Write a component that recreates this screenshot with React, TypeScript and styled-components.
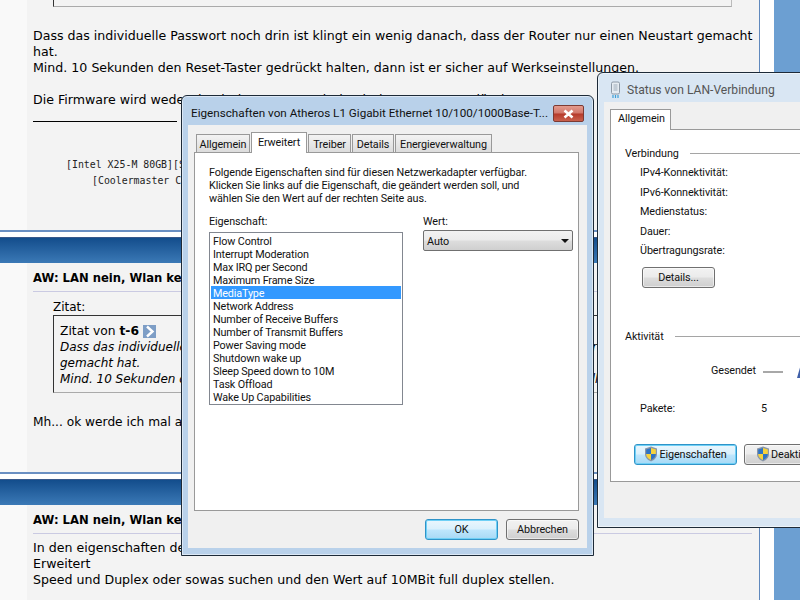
import React from "react";
import styled, { createGlobalStyle } from "styled-components";

const Global = createGlobalStyle`
  html, body { margin: 0; padding: 0; width: 800px; height: 600px; overflow: hidden; background: #fff; }
  #root { width: 800px; height: 600px; }
`;

const Page = styled.div`
  position: relative;
  width: 800px;
  height: 600px;
  overflow: hidden;
  display: grid;
  grid-template-columns: 760px 14px 26px;
  font: 12.6px/16px "DejaVu Sans", Verdana, sans-serif;
  color: #000;
  background: #fff;
`;
const Main = styled.main`
  border-right: 1px solid #5f88bd;
  display: flex;
  flex-direction: column;
  height: 600px;
  overflow: hidden;
`;
const Side = styled.div`
  grid-column: 3;
  background: #6c9fd2;
`;
const Post = styled.section<{ $h: number }>`
  height: ${(p) => p.$h}px;
  flex: none;
  box-sizing: border-box;
  border-left: 27px solid #f9f9f9;
  background: #f3f3f3;
  padding: 0 7px 0 6px;
  overflow: hidden;
`;
const Separator = styled.div`
  flex: none;
  height: 33px;
  box-sizing: border-box;
  border-top: 2px solid #6a8fc2;
  background: #fff;
  padding-top: 5px;
`;
const Band = styled.div`
  height: 26px;
  box-sizing: border-box;
  border-top: 1px solid #38588a;
  background: linear-gradient(#134d8c, #3b79b6);
`;
const TopQuote = styled.div`
  margin-left: 20px;
  width: 679px;
  height: 7px;
  box-sizing: border-box;
  border-left: 1px solid #333;
  border-right: 1px solid #bbb;
  border-bottom: 1px solid #aaa;
`;
const Para = styled.p<{ $top?: number; $size?: number }>`
  margin: ${(p) => p.$top ?? 0}px 0 0;
  font-size: ${(p) => p.$size ?? 12.6}px;
  white-space: nowrap;
`;
const SigRule = styled.div`
  width: 144px;
  height: 1px;
  background: #000;
  margin-top: 13px;
`;
const Sig = styled.div<{ $indent: number; $top: number }>`
  font: 9.9px/16px "DejaVu Sans Mono", monospace;
  margin: ${(p) => p.$top}px 0 0 ${(p) => p.$indent}px;
  white-space: nowrap;
  color: #222;
`;
const PostTitle = styled.h3`
  margin: 0;
  padding: 7px 0 5px;
  font: bold 11.6px/16px "DejaVu Sans", Verdana, sans-serif;
  border-bottom: 1px solid #cacae2;
  white-space: nowrap;
`;
const QuoteLabel = styled.div`
  margin: 7px 0 0 20px;
  font-size: 12px;
  line-height: 16px;
`;
const QuoteBox = styled.blockquote`
  margin: 0 0 0 20px;
  width: 679px;
  height: 78px;
  box-sizing: border-box;
  border: 1px solid #aaa;
  border-left-color: #333;
  border-top-color: #333;
  padding: 7px 6px 0;
  white-space: nowrap;
  font-size: 12.3px;
`;
const Author = styled.b`
  font-weight: bold;
`;
const QuoteArrow = styled.span`
  display: inline-flex;
  vertical-align: -3px;
  margin-left: 4px;
`;
const Em = styled.div`
  font-style: italic;
  font-size: 12px;
`;

/* windows */
const Win = styled.div<{ $x: number; $y: number; $w: number; $h: number; $glass: string; $pb: number }>`
  position: absolute;
  left: ${(p) => p.$x}px;
  top: ${(p) => p.$y}px;
  width: ${(p) => p.$w}px;
  height: ${(p) => p.$h}px;
  box-sizing: border-box;
  border: 1px solid #1d2a38;
  border-radius: 6px 6px 0 0;
  background: ${(p) => p.$glass};
  box-shadow: inset 0 0 0 1px rgba(255, 255, 255, 0.5);
  padding: 0 6px ${(p) => p.$pb}px;
  display: flex;
  flex-direction: column;
  font: 10.8px/13px Roboto, "Noto Sans", sans-serif;
  letter-spacing: -0.1px;
  color: #111;
`;
const TitleBar = styled.div`
  height: 29px;
  box-sizing: border-box;
  padding-top: 5px;
  flex: none;
  display: flex;
  align-items: center;
  white-space: nowrap;
  position: relative;
  letter-spacing: 0;
`;
const TitleIcon = styled.svg`
  margin: 0 5px;
  flex: none;
`;
const GreyTitle = styled.span`
  color: #555;
  font-size: 12.1px;
`;
const DarkTitle = styled.span`
  margin-left: 3px;
  color: #111;
  font-size: 11.7px;
`;
const CloseBtn = styled.div`
  position: absolute;
  right: 3px;
  top: 9px;
  width: 31px;
  height: 17px;
  box-sizing: border-box;
  border: 1px solid #7c3a33;
  border-radius: 2px;
  background: linear-gradient(#e39a8d 0%, #d1766a 48%, #b5392a 52%, #c9604d 100%);
  display: flex;
  align-items: center;
  justify-content: center;
`;
const Client = styled.div<{ $pr: number }>`
  flex: 1;
  background: #f0f0f0;
  padding: 7px ${(p) => p.$pr}px 0 6px;
  display: flex;
  flex-direction: column;
  min-height: 0;
`;
const Tabs = styled.div`
  display: flex;
  gap: 1px;
  height: 20px;
  flex: none;
  padding-left: 2px;
  align-items: flex-end;
`;
const Tab = styled.div<{ $active?: boolean; $w: number }>`
  width: ${(p) => p.$w}px;
  height: ${(p) => (p.$active ? 21 : 18)}px;
  box-sizing: border-box;
  padding-top: 2px;
  text-align: center;
  border: 1px solid #999;
  border-bottom: none;
  margin-bottom: ${(p) => (p.$active ? -1 : 0)}px;
  background: ${(p) => (p.$active ? "#fff" : "linear-gradient(#f3f3f3, #dcdcdc)")};
  position: relative;
  z-index: ${(p) => (p.$active ? 2 : 1)};
  line-height: 15px;
  white-space: nowrap;
`;
const Pane = styled.div`
  flex: 1;
  box-sizing: border-box;
  background: #fff;
  border: 1px solid #999;
  padding: 13px 4px 0 14px;
  min-height: 0;
`;
const Intro = styled.div`
  line-height: 13px;
  white-space: nowrap;
`;
const Columns = styled.div`
  display: flex;
  gap: 20px;
  margin-top: 9px;
`;
const Col = styled.div<{ $w: number }>`
  width: ${(p) => p.$w}px;
`;
const Label = styled.div`
  height: 17px;
  line-height: 13px;
  padding-top: 1px;
  box-sizing: border-box;
`;
const ListBox = styled.div`
  box-sizing: border-box;
  height: 173px;
  border: 1px solid #828790;
  padding: 1px;
  margin-top: 1px;
`;
const ListItem = styled.div<{ $sel?: boolean }>`
  height: 13px;
  line-height: 15px;
  padding-left: 2px;
  letter-spacing: -0.15px;
  background: ${(p) => (p.$sel ? "#3399ff" : "transparent")};
  color: ${(p) => (p.$sel ? "#fff" : "#111")};
  white-space: nowrap;
`;
const Combo = styled.div`
  height: 21px;
  box-sizing: border-box;
  border: 1px solid #707070;
  border-radius: 2px;
  background: linear-gradient(#f2f2f2 0%, #ebebeb 48%, #dddddd 52%, #cfcfcf 100%);
  display: flex;
  align-items: center;
  justify-content: space-between;
  padding: 1px 3px 0;
  margin-top: -1px;
`;
const Caret = styled.span`
  width: 0;
  height: 0;
  border-left: 4px solid transparent;
  border-right: 4px solid transparent;
  border-top: 4px solid #111;
`;
const Footer = styled.div`
  flex: none;
  height: 37px;
  box-sizing: border-box;
  display: flex;
  justify-content: flex-end;
  align-items: flex-start;
  gap: 8px;
  padding: 8px 0 0;
`;
const Btn = styled.div<{ $w: number; $focus?: boolean }>`
  width: ${(p) => p.$w}px;
  height: 21px;
  box-sizing: border-box;
  border: 1px solid ${(p) => (p.$focus ? "#2f93c8" : "#707070")};
  border-radius: 3px;
  background: ${(p) =>
    p.$focus
      ? "linear-gradient(#eaf6fd 0%, #d9f0fc 48%, #bee6fd 52%, #a7d9f5 100%)"
      : "linear-gradient(#f2f2f2 0%, #ebebeb 48%, #dddddd 52%, #cfcfcf 100%)"};
  box-shadow: inset 0 0 0 1px ${(p) => (p.$focus ? "#6fd0f6" : "rgba(255, 255, 255, 0.55)")};
  display: flex;
  align-items: center;
  justify-content: center;
  flex: none;
  white-space: nowrap;
`;
const StatusTab = styled.div`
  width: 61px;
  height: 21px;
  flex: none;
  box-sizing: border-box;
  border: 1px solid #999;
  border-bottom: none;
  background: #fff;
  margin-bottom: -1px;
  position: relative;
  z-index: 2;
  padding: 2px 0 0 7px;
  line-height: 14px;
`;
const StatusPane = styled.div`
  flex: none;
  height: 353px;
  width: 400px;
  box-sizing: border-box;
  background: #fff;
  border: 1px solid #999;
  padding-left: 14px;
`;
const GroupHead = styled.div<{ $top: number }>`
  display: flex;
  align-items: center;
  gap: 11px;
  margin-top: ${(p) => p.$top}px;
  height: 14px;
  &::after {
    content: "";
    flex: 1;
    height: 1px;
    background: #a5a5a5;
  }
`;
const InfoRows = styled.div`
  margin: 3px 0 0 15px;
`;
const InfoRow = styled.div`
  height: 19.5px;
  line-height: 19px;
`;
const DetailsBtn = styled(Btn)`
  margin: 6px 0 0 17px;
`;
const SentRow = styled.div`
  display: flex;
  align-items: center;
  margin: 20px 0 0 86px;
  height: 14px;
`;
const SentDash = styled.span`
  width: 20px;
  height: 2px;
  background: #a8a8a8;
  margin: 2px 0 0 7px;
`;
const SentIcon = styled.svg`
  margin-left: 13px;
  flex: none;
`;
const PacketsRow = styled.div`
  display: flex;
  margin: 24px 0 0 15px;
  height: 14px;
`;
const PacketsLabel = styled.span`
  width: 121px;
`;
const ActionRow = styled.div`
  display: flex;
  gap: 7px;
  margin: 28px 0 0 9px;
`;
const ShieldWrap = styled.svg`
  margin-right: 1px;
  flex: none;
`;

const Shield = () => (
  <ShieldWrap width="14" height="16" viewBox="0 0 14 16">
    <path d="M7 .6 13 2.6V8c0 3.6-2.6 6-6 7.4C3.6 14 1 11.6 1 8V2.6Z" fill="#8a96a8" />
    <path d="M7 2 7 8H2.2V3.4Z" fill="#2f74c4" />
    <path d="M7 2 11.8 3.4V8H7Z" fill="#f6d33c" />
    <path d="M2.2 8H7V14C4.4 12.8 2.2 11 2.2 8Z" fill="#f6d33c" />
    <path d="M7 8h4.8c0 3-2.2 4.8-4.8 6Z" fill="#2f74c4" />
  </ShieldWrap>
);

const props = [
  "Flow Control",
  "Interrupt Moderation",
  "Max IRQ per Second",
  "Maximum Frame Size",
  "MediaType",
  "Network Address",
  "Number of Receive Buffers",
  "Number of Transmit Buffers",
  "Power Saving mode",
  "Shutdown wake up",
  "Sleep Speed down to 10M",
  "Task Offload",
  "Wake Up Capabilities",
];

export default function App() {
  return (
    <Page>
      <Global />
      <Main>
        <Post $h={230}>
          <TopQuote />
          <Para $top={21}>
            Dass das individuelle Passwort noch drin ist klingt ein wenig danach, dass der Router nur einen Neustart gemacht
            <br />
            hat.
            <br />
            Mind. 10 Sekunden den Reset-Taster gedrückt halten, dann ist er sicher auf Werkseinstellungen.
            <br />
            <br />
            Die Firmware wird weder durch den Reset noch durch den Neustart gelöscht.
          </Para>
          <SigRule />
          <Sig $indent={33} $top={35}>[Intel X25-M 80GB][Samsung SpinPoint F1 1TB]</Sig>
          <Sig $indent={59} $top={0}>[Coolermaster CM 690 II Advanced]</Sig>
        </Post>
        <Separator>
          <Band />
        </Separator>
        <Post $h={209}>
          <PostTitle>AW: LAN nein, Wlan keine Verbindung</PostTitle>
          <QuoteLabel>Zitat:</QuoteLabel>
          <QuoteBox>
            Zitat von <Author>t-6</Author>
            <QuoteArrow>
              <svg width="13" height="13" viewBox="0 0 13 13">
                <rect width="13" height="13" fill="#7e9ec6" />
                <path d="M4 1.500 9.500 6.500 4 11.500" fill="none" stroke="#fff" strokeWidth="2.400" />
              </svg>
            </QuoteArrow>
            <Em>Dass das individuelle Passwort noch drin ist klingt ein wenig danach, dass der Router nur einen Neustart</Em>
            <Em>gemacht hat.</Em>
            <Em>Mind. 10 Sekunden den Reset-Taster gedrückt halten, dann ist er sicher auf Werkseinstellungen.</Em>
          </QuoteBox>
          <Para $top={21} $size={12.2}>Mh... ok werde ich mal ausprobieren.</Para>
        </Post>
        <Separator>
          <Band />
        </Separator>
        <Post $h={100}>
          <PostTitle>AW: LAN nein, Wlan keine Verbindung</PostTitle>
          <Para $top={6}>
            In den eigenschaften der Netzwerkkarte auf
            <br />
            Erweitert
            <br />
            Speed und Duplex oder sowas suchen und den Wert auf 10MBit full duplex stellen.
          </Para>
        </Post>
      </Main>
      <Side />

      <Win $x={597} $y={72} $w={300} $h={456} $glass="#d9e6f3" $pb={9}>
        <TitleBar>
          <TitleIcon width="13" height="18" viewBox="0 0 13 18">
            <rect x="2.500" y="1" width="8" height="12" rx="1.500" fill="#e6ecf2" stroke="#8d99a6" />
            <rect x="4.500" y="3" width="4" height="7" fill="#c2ccd6" />
            <path d="M4 14v3M6.500 14v3M9 14v3" stroke="#3ca0d8" strokeWidth="1.200" />
          </TitleIcon>
          <GreyTitle>Status von LAN-Verbindung</GreyTitle>
        </TitleBar>
        <Client $pr={6}>
          <StatusTab>Allgemein</StatusTab>
          <StatusPane>
            <GroupHead $top={16}>Verbindung</GroupHead>
            <InfoRows>
              <InfoRow>IPv4-Konnektivität:</InfoRow>
              <InfoRow>IPv6-Konnektivität:</InfoRow>
              <InfoRow>Medienstatus:</InfoRow>
              <InfoRow>Dauer:</InfoRow>
              <InfoRow>Übertragungsrate:</InfoRow>
            </InfoRows>
            <DetailsBtn $w={73}>Details...</DetailsBtn>
            <GroupHead $top={42}>Aktivität</GroupHead>
            <SentRow>
              Gesendet
              <SentDash />
              <SentIcon width="12" height="16" viewBox="0 0 12 16">
                <path d="M1 15 5 1h6v14Z" fill="#3f5fa8" />
              </SentIcon>
            </SentRow>
            <PacketsRow>
              <PacketsLabel>Pakete:</PacketsLabel>5
            </PacketsRow>
            <ActionRow>
              <Btn $w={103} $focus>
                <Shield />
                Eigenschaften
              </Btn>
              <Btn $w={97}>
                <Shield />
                Deaktivieren
              </Btn>
            </ActionRow>
          </StatusPane>
        </Client>
      </Win>

      <Win $x={181} $y={95} $w={413} $h={461} $glass="#b9d1ea" $pb={7}>
        <TitleBar>
          <DarkTitle>Eigenschaften von Atheros L1 Gigabit Ethernet 10/100/1000Base-T...</DarkTitle>
          <CloseBtn>
            <svg width="13" height="10" viewBox="0 0 13 10">
              <path d="M2.500 1.500 10.500 8.500M10.500 1.500 2.500 8.500" stroke="#fff" strokeWidth="2.600" />
            </svg>
          </CloseBtn>
        </TitleBar>
        <Client $pr={8}>
          <Tabs>
            <Tab $w={54}>Allgemein</Tab>
            <Tab $w={56} $active>Erweitert</Tab>
            <Tab $w={43}>Treiber</Tab>
            <Tab $w={42}>Details</Tab>
            <Tab $w={97}>Energieverwaltung</Tab>
          </Tabs>
          <Pane>
            <Intro>
              Folgende Eigenschaften sind für diesen Netzwerkadapter verfügbar.
              <br />
              Klicken Sie links auf die Eigenschaft, die geändert werden soll, und
              <br />
              wählen Sie den Wert auf der rechten Seite aus.
            </Intro>
            <Columns>
              <Col $w={194}>
                <Label>Eigenschaft:</Label>
                <ListBox>
                  {props.map((item) => (
                    <ListItem key={item} $sel={item === "MediaType"}>
                      {item}
                    </ListItem>
                  ))}
                </ListBox>
              </Col>
              <Col $w={150}>
                <Label>Wert:</Label>
                <Combo>
                  Auto
                  <Caret />
                </Combo>
              </Col>
            </Columns>
          </Pane>
          <Footer>
            <Btn $w={73} $focus>OK</Btn>
            <Btn $w={73}>Abbrechen</Btn>
          </Footer>
        </Client>
      </Win>
    </Page>
  );
}
